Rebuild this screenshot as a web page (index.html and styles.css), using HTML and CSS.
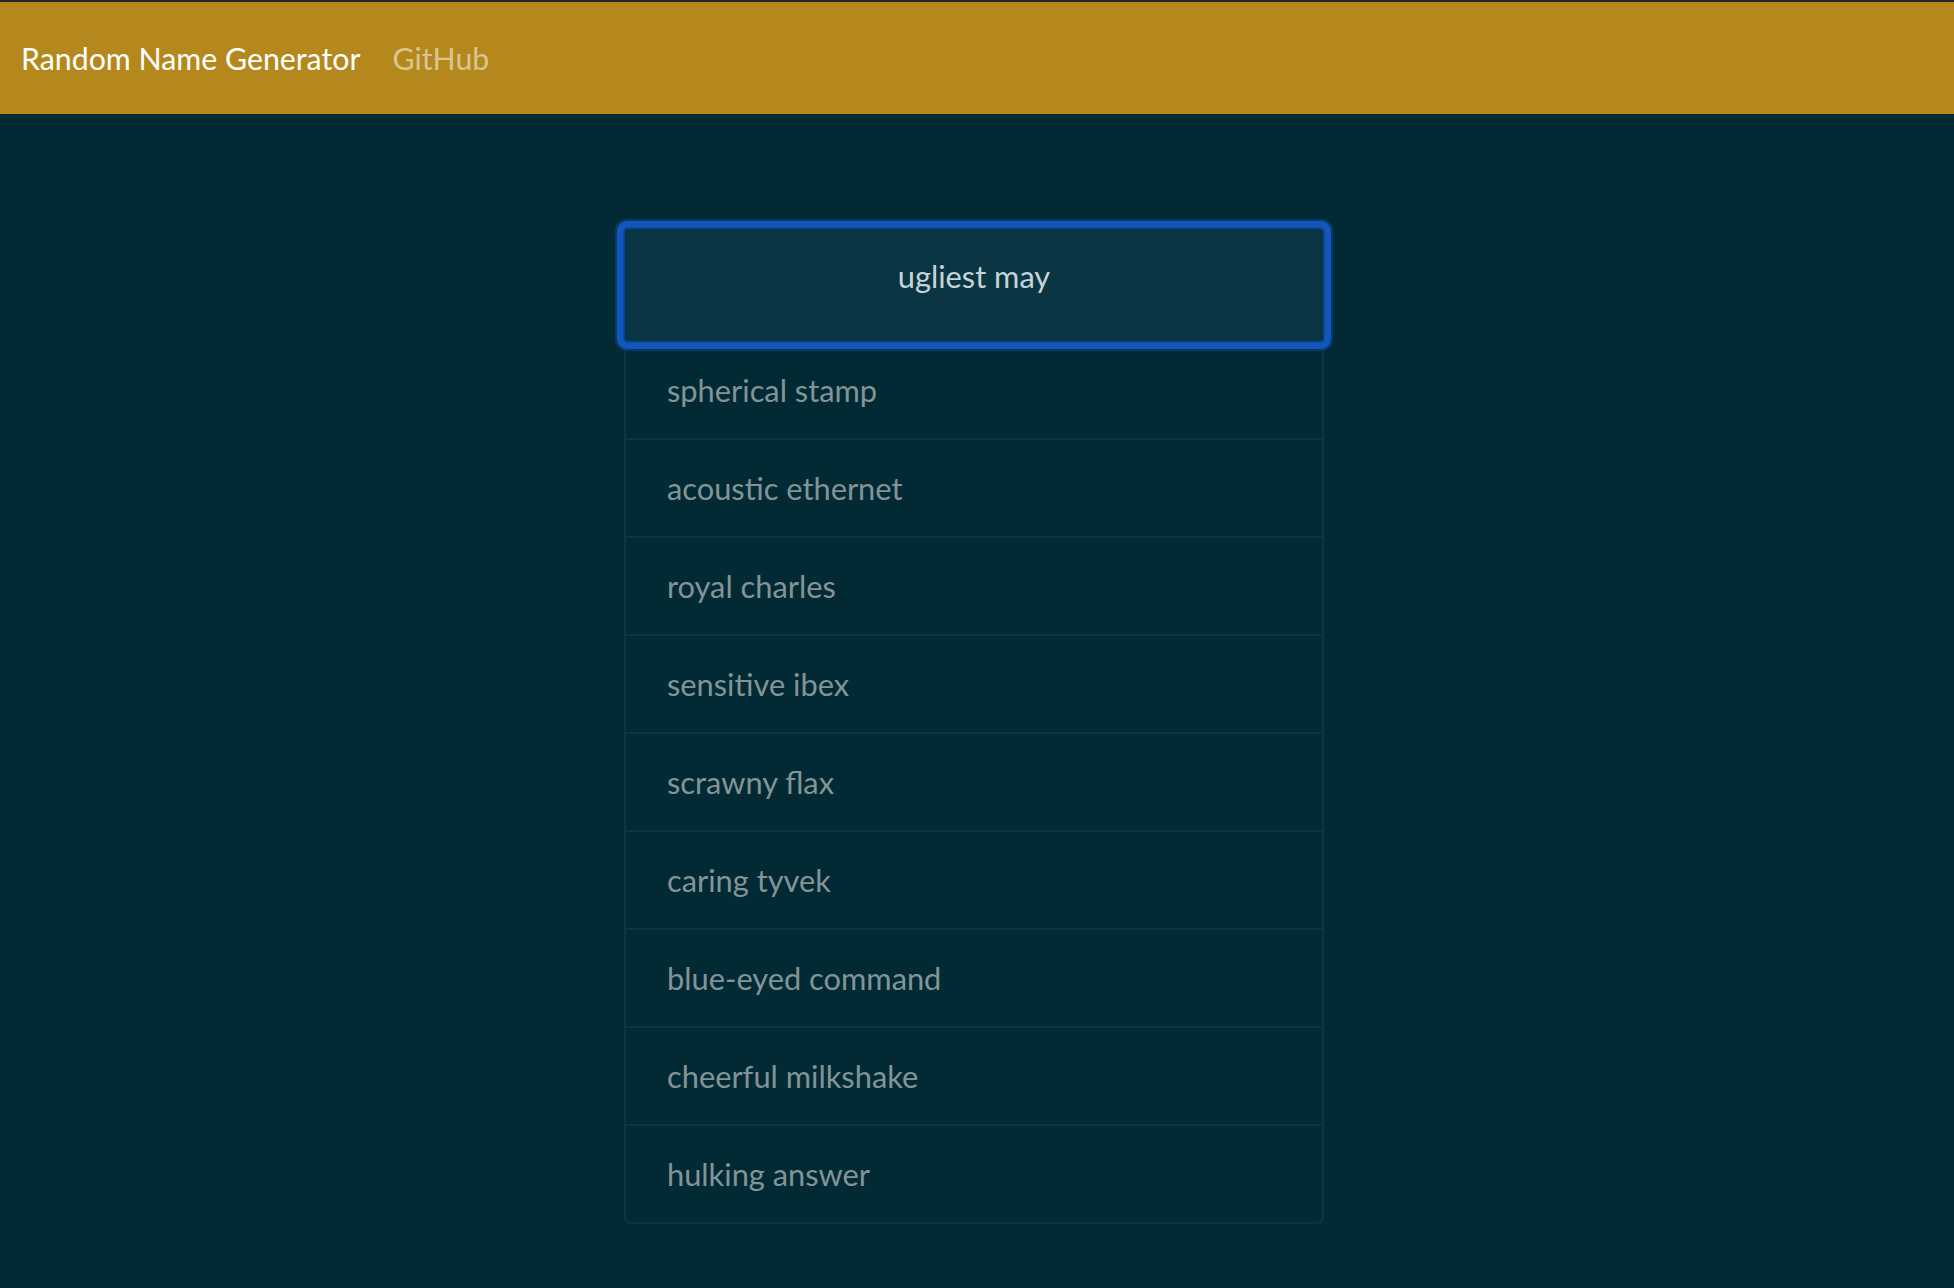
FILE: index.html
```html
<!DOCTYPE html>
<html lang="en">
<head>
<meta charset="utf-8">
<title>Random Name Generator</title>
<link rel="stylesheet" href="styles.css">
</head>
<body>
<header class="navbar">
  <a class="brand" href="#">Random Name Generator</a>
  <a class="nav-link" href="#">GitHub</a>
</header>
<main class="main">
  <ul class="list">
    <li class="item item-active">ugliest may</li>
    <li class="item">spherical stamp</li>
    <li class="item">acoustic ethernet</li>
    <li class="item">royal charles</li>
    <li class="item">sensitive ibex</li>
    <li class="item">scrawny flax</li>
    <li class="item">caring tyvek</li>
    <li class="item">blue-eyed command</li>
    <li class="item">cheerful milkshake</li>
    <li class="item">hulking answer</li>
  </ul>
</main>
</body>
</html>
```
FILE: styles.css
```css
* { box-sizing: border-box; }
html, body {
  margin: 0;
  padding: 0;
  background: #022a35;
  font-family: "Lato", "Liberation Sans", sans-serif;
}
body { min-height: 1288px; }

.navbar {
  border-top: 2px solid #262626;
  height: 114px;
  background: #b5881d;
  display: flex;
  align-items: center;
  padding-left: 21px;
  gap: 32px;
}
.brand {
  color: #ffffff;
  text-decoration: none;
  font-size: 30.3px;
  line-height: 1;
  margin-top: 1px;
}
.nav-link {
  color: #dac591;
  text-decoration: none;
  font-size: 30.3px;
  line-height: 1;
  margin-top: 1px;
}

.main {
  padding-top: 114px;
  padding-right: 6px;
  display: flex;
  justify-content: center;
}
.list {
  list-style: none;
  margin: 0;
  padding: 0;
  width: 700px;
  border: 2px solid #0a3642;
  border-top: none;
  border-radius: 7px;
}
.item {
  height: 98px;
  display: flex;
  align-items: center;
  padding-left: 41px;
  border-bottom: 2px solid #0a3642;
  color: #839496;
  font-size: 30.8px;
}
.item:last-child { border-bottom: none; height: 96px; }
.item-active {
  height: 114px;
  margin: 0 -2px;
  justify-content: center;
  padding-left: 0;
  padding-bottom: 17px;
  background: #0a3542;
  color: #c6d4d8;
  border: 1px solid #0b4690;
  border-radius: 4px;
  box-shadow: 0 0 0 1px #0d4c9e, 0 0 0 7px #1257bd, 0 0 0 9px rgba(14, 70, 150, 0.55);
  position: relative;
  z-index: 1;
}
```
